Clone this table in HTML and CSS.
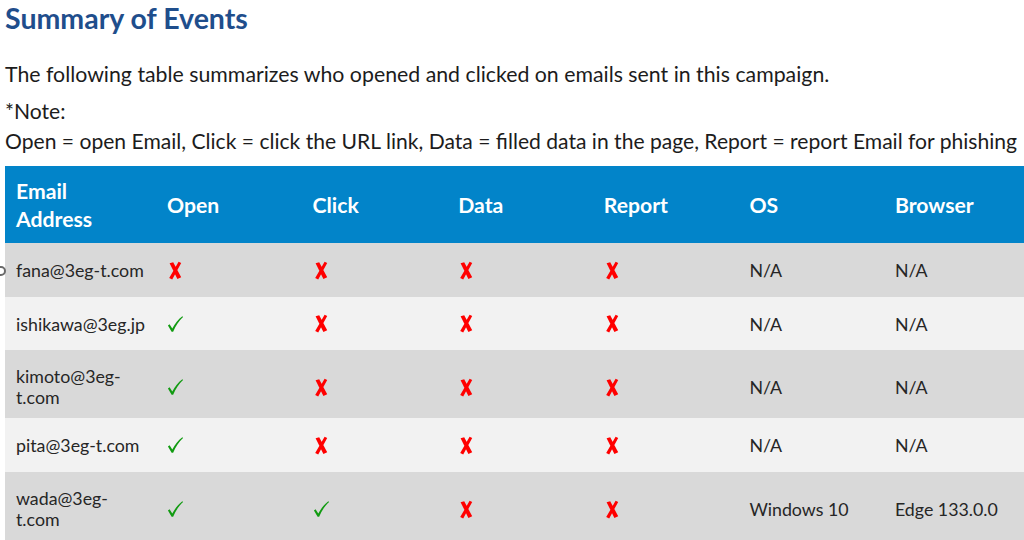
FILE: index.html
```html
<!DOCTYPE html>
<html lang="en">
<head>
<meta charset="utf-8">
<title>Summary of Events</title>
<link rel="stylesheet" href="styles.css">
</head>
<body>
<div class="page">
  <h1 class="title">Summary of Events</h1>
  <p class="intro">The following table summarizes who opened and clicked on emails sent in this campaign.</p>
  <p class="note">*Note:<br>Open = open Email, Click = click the URL link, Data = filled data in the page, Report = report Email for phishing</p>
  <div class="table-wrap">
    <span class="edge-dot"></span>
    <table class="events">
      <colgroup>
        <col class="c-email"><col class="c"><col class="c"><col class="c"><col class="c"><col class="c"><col class="c">
      </colgroup>
      <thead>
        <tr>
          <th>Email<br>Address</th><th>Open</th><th>Click</th><th>Data</th><th>Report</th><th>OS</th><th>Browser</th>
        </tr>
      </thead>
      <tbody>
        <tr class="dark r1">
          <td>fana@3eg-t.com</td>
          <td><svg class="no" viewBox="0 0 14 19"><path d="M1.6 2.2 L5.2 1.2 L13.2 16.2 L9.4 17.9 Z M10.6 0.8 L13.2 1.9 L4.2 18.4 L1.2 17.1 Z"/></svg></td>
          <td><svg class="no" viewBox="0 0 14 19"><path d="M1.6 2.2 L5.2 1.2 L13.2 16.2 L9.4 17.9 Z M10.6 0.8 L13.2 1.9 L4.2 18.4 L1.2 17.1 Z"/></svg></td>
          <td><svg class="no" viewBox="0 0 14 19"><path d="M1.6 2.2 L5.2 1.2 L13.2 16.2 L9.4 17.9 Z M10.6 0.8 L13.2 1.9 L4.2 18.4 L1.2 17.1 Z"/></svg></td>
          <td><svg class="no" viewBox="0 0 14 19"><path d="M1.6 2.2 L5.2 1.2 L13.2 16.2 L9.4 17.9 Z M10.6 0.8 L13.2 1.9 L4.2 18.4 L1.2 17.1 Z"/></svg></td>
          <td>N/A</td><td>N/A</td>
        </tr>
        <tr class="light r2">
          <td>ishikawa@3eg.jp</td>
          <td><svg class="yes" viewBox="0 0 18 18"><path d="M1 10.5 L2.7 9.3 L5.6 13.8 C8.4 8.6 11.8 4.2 16.2 0.8 L17 1.6 C12.6 5.6 9.4 10.6 6.5 17.2 L4.9 17.2 Z"/></svg></td>
          <td><svg class="no" viewBox="0 0 14 19"><path d="M1.6 2.2 L5.2 1.2 L13.2 16.2 L9.4 17.9 Z M10.6 0.8 L13.2 1.9 L4.2 18.4 L1.2 17.1 Z"/></svg></td>
          <td><svg class="no" viewBox="0 0 14 19"><path d="M1.6 2.2 L5.2 1.2 L13.2 16.2 L9.4 17.9 Z M10.6 0.8 L13.2 1.9 L4.2 18.4 L1.2 17.1 Z"/></svg></td>
          <td><svg class="no" viewBox="0 0 14 19"><path d="M1.6 2.2 L5.2 1.2 L13.2 16.2 L9.4 17.9 Z M10.6 0.8 L13.2 1.9 L4.2 18.4 L1.2 17.1 Z"/></svg></td>
          <td>N/A</td><td>N/A</td>
        </tr>
        <tr class="dark r3">
          <td>kimoto@3eg-<br>t.com</td>
          <td><svg class="yes" viewBox="0 0 18 18"><path d="M1 10.5 L2.7 9.3 L5.6 13.8 C8.4 8.6 11.8 4.2 16.2 0.8 L17 1.6 C12.6 5.6 9.4 10.6 6.5 17.2 L4.9 17.2 Z"/></svg></td>
          <td><svg class="no" viewBox="0 0 14 19"><path d="M1.6 2.2 L5.2 1.2 L13.2 16.2 L9.4 17.9 Z M10.6 0.8 L13.2 1.9 L4.2 18.4 L1.2 17.1 Z"/></svg></td>
          <td><svg class="no" viewBox="0 0 14 19"><path d="M1.6 2.2 L5.2 1.2 L13.2 16.2 L9.4 17.9 Z M10.6 0.8 L13.2 1.9 L4.2 18.4 L1.2 17.1 Z"/></svg></td>
          <td><svg class="no" viewBox="0 0 14 19"><path d="M1.6 2.2 L5.2 1.2 L13.2 16.2 L9.4 17.9 Z M10.6 0.8 L13.2 1.9 L4.2 18.4 L1.2 17.1 Z"/></svg></td>
          <td>N/A</td><td>N/A</td>
        </tr>
        <tr class="light r4">
          <td>pita@3eg-t.com</td>
          <td><svg class="yes" viewBox="0 0 18 18"><path d="M1 10.5 L2.7 9.3 L5.6 13.8 C8.4 8.6 11.8 4.2 16.2 0.8 L17 1.6 C12.6 5.6 9.4 10.6 6.5 17.2 L4.9 17.2 Z"/></svg></td>
          <td><svg class="no" viewBox="0 0 14 19"><path d="M1.6 2.2 L5.2 1.2 L13.2 16.2 L9.4 17.9 Z M10.6 0.8 L13.2 1.9 L4.2 18.4 L1.2 17.1 Z"/></svg></td>
          <td><svg class="no" viewBox="0 0 14 19"><path d="M1.6 2.2 L5.2 1.2 L13.2 16.2 L9.4 17.9 Z M10.6 0.8 L13.2 1.9 L4.2 18.4 L1.2 17.1 Z"/></svg></td>
          <td><svg class="no" viewBox="0 0 14 19"><path d="M1.6 2.2 L5.2 1.2 L13.2 16.2 L9.4 17.9 Z M10.6 0.8 L13.2 1.9 L4.2 18.4 L1.2 17.1 Z"/></svg></td>
          <td>N/A</td><td>N/A</td>
        </tr>
        <tr class="dark r5">
          <td>wada@3eg-<br>t.com</td>
          <td><svg class="yes" viewBox="0 0 18 18"><path d="M1 10.5 L2.7 9.3 L5.6 13.8 C8.4 8.6 11.8 4.2 16.2 0.8 L17 1.6 C12.6 5.6 9.4 10.6 6.5 17.2 L4.9 17.2 Z"/></svg></td>
          <td><svg class="yes" viewBox="0 0 18 18"><path d="M1 10.5 L2.7 9.3 L5.6 13.8 C8.4 8.6 11.8 4.2 16.2 0.8 L17 1.6 C12.6 5.6 9.4 10.6 6.5 17.2 L4.9 17.2 Z"/></svg></td>
          <td><svg class="no" viewBox="0 0 14 19"><path d="M1.6 2.2 L5.2 1.2 L13.2 16.2 L9.4 17.9 Z M10.6 0.8 L13.2 1.9 L4.2 18.4 L1.2 17.1 Z"/></svg></td>
          <td><svg class="no" viewBox="0 0 14 19"><path d="M1.6 2.2 L5.2 1.2 L13.2 16.2 L9.4 17.9 Z M10.6 0.8 L13.2 1.9 L4.2 18.4 L1.2 17.1 Z"/></svg></td>
          <td>Windows 10</td><td>Edge 133.0.0</td>
        </tr>
      </tbody>
    </table>
  </div>
</div>
</body>
</html>
```

FILE: styles.css
```css
html, body {
  margin: 0;
  padding: 0;
  background: #ffffff;
  overflow: hidden;
}

.page {
  width: 1024px;
  height: 540px;
  padding-left: 5px;
  box-sizing: border-box;
  font-family: Lato, "Open Sans", "Liberation Sans", sans-serif;
  color: #1c1c1c;
  overflow: hidden;
}

.title {
  margin: 0;
  font-size: 28.5px;
  line-height: 36px;
  font-weight: 700;
  color: #1f4e8c;
}

.intro {
  margin: 24px 0 0;
  font-size: 21.3px;
  line-height: 28px;
  white-space: nowrap;
}

.note {
  margin: 8px 0 0;
  font-size: 21.1px;
  line-height: 30px;
  white-space: nowrap;
}

.table-wrap {
  position: relative;
  margin-top: 10px;
}

.edge-dot {
  position: absolute;
  left: -9px;
  top: 100px;
  width: 10px;
  height: 10px;
  border-radius: 50%;
  border: 2px solid #6a6a6a;
  box-sizing: border-box;
}

.events {
  border-collapse: collapse;
  table-layout: fixed;
  width: 1024px;
}

.c-email { width: 151px; }
.c { width: 145.6px; }

.events th {
  background: #0284c9;
  color: #ffffff;
  font-size: 21.2px;
  line-height: 28px;
  font-weight: 700;
  text-align: left;
  padding: 0 8px 0 11px;
  height: 77px;
  vertical-align: middle;
}

.events td {
  font-size: 17.8px;
  line-height: 20px;
  color: #262626;
  padding: 0 8px 0 11px;
  vertical-align: middle;
  white-space: nowrap;
}

.dark td { background: #d9d9d9; }
.light td { background: #f2f2f2; }

.r1 td { height: 54px; }
.r2 td { height: 53px; }
.r3 td { height: 68px; padding-top: 6px; box-sizing: border-box; }
.r4 td { height: 54px; }
.r5 td { height: 68px; padding-top: 6px; box-sizing: border-box; }

.r3 td:first-child,
.r5 td:first-child { line-height: 21px; }

.no {
  display: block;
  width: 14px;
  height: 19px;
  margin-left: 1px;
  fill: #ff0000;
}

.yes {
  display: block;
  width: 17px;
  height: 18px;
  fill: #119b11;
}
```
